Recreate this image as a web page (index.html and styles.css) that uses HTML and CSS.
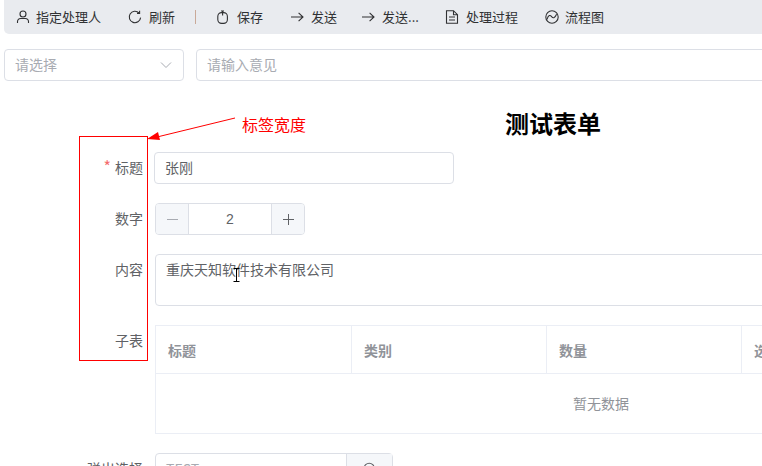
FILE: index.html
```html
<!DOCTYPE html>
<html lang="zh-CN">
<head>
<meta charset="utf-8">
<title>测试表单</title>
<link rel="stylesheet" href="styles.css">
</head>
<body>
<div class="page">
  <div class="toolbar">
    <span class="tool"><svg class="ic" viewBox="0 0 14 14"><circle cx="7" cy="4" r="3"/><path d="M1.5 13v-1.5a3 3 0 0 1 3-3h5a3 3 0 0 1 3 3V13"/></svg>指定处理人</span>
    <span class="tool"><svg class="ic" viewBox="0 0 14 14"><path d="M12.6 7.6A5.7 5.7 0 1 1 11 3"/><path d="M11.6 .8V3.4H9"/></svg>刷新</span>
    <span class="sep"></span>
    <span class="tool"><svg class="ic" viewBox="0 0 14 14"><rect x="1.8" y="2.6" width="9.6" height="10.8" rx="3.8"/><path d="M6.6 5.6V.8M5 1h3"/></svg>保存</span>
    <span class="tool"><svg class="ic" viewBox="0 0 14 14"><path d="M1 7h12M8.6 2.8 13 7l-4.4 4.2"/></svg>发送</span>
    <span class="tool"><svg class="ic" viewBox="0 0 14 14"><path d="M1 7h12M8.6 2.8 13 7l-4.4 4.2"/></svg>发送...</span>
    <span class="tool"><svg class="ic" viewBox="0 0 14 14"><path d="M1.5.7h7l4 4v8.6h-11zM8.5.7v4h4M4 7h6M4 10h6"/></svg>处理过程</span>
    <span class="tool"><svg class="ic" viewBox="0 0 14 14"><circle cx="7" cy="7" r="6.2"/><path d="M2 9.4c1.5-4.6 3.2-4.6 4.6-2.8s3 1.8 5-2.4"/></svg>流程图</span>
  </div>

  <div class="opinion">
    <div class="field select"><span class="placeholder">请选择</span><svg class="chev" viewBox="0 0 12 8"><path d="M1 1.5 6 6.5l5-5"/></svg></div>
    <div class="field grow"><span class="placeholder">请输入意见</span></div>
  </div>

  <h1 class="title">测试表单</h1>

  <form class="form">
    <div class="row">
      <label class="label"><span class="req">*</span>标题</label>
      <div class="field name"><span class="value">张刚</span></div>
    </div>
    <div class="row">
      <label class="label">数字</label>
      <div class="stepper">
        <span class="step minus"><svg class="sign" viewBox="0 0 11 11"><path d="M0 5.5h11"/></svg></span>
        <span class="num">2</span>
        <span class="step plus"><svg class="sign" viewBox="0 0 11 11"><path d="M0 5.5h11M5.5 0v11"/></svg></span>
      </div>
    </div>
    <div class="row">
      <label class="label">内容</label>
      <div class="field area"><span class="value">重庆天知软件技术有限公司</span></div>
    </div>
    <div class="row">
      <label class="label">子表</label>
      <div class="table">
        <div class="thead">
          <span class="th">标题</span>
          <span class="th">类别</span>
          <span class="th">数量</span>
          <span class="th">选择</span>
        </div>
        <div class="empty">暂无数据</div>
      </div>
    </div>
    <div class="row">
      <label class="label">弹出选择</label>
      <div class="picker">
        <span class="pick-text">TEST</span>
        <span class="pick-btn"><svg class="ic search" viewBox="0 0 14 14"><circle cx="6.2" cy="6.2" r="5"/><path d="m10 10 3 3"/></svg></span>
      </div>
    </div>
  </form>

  <div class="anno-box"></div>
  <svg class="anno-arrow" viewBox="0 0 90 24"><path d="M88 1 10 20"/><polygon points="0,22 11,15 13,23"/></svg>
  <span class="anno-text">标签宽度</span>
  <svg class="ibeam" viewBox="0 0 7 14"><path d="M.5.5h6M3.5.5v13M.5 13.5h6"/></svg>
</div>
</body>
</html>
```
FILE: styles.css
```css
* { box-sizing: border-box; }
html, body { margin: 0; height: 100%; overflow: hidden; background: #fff; }
body { font-family: "Noto Sans CJK SC", "Liberation Sans", sans-serif; font-size: 14px; color: #606266; }
.page { position: relative; width: 1106px; height: 466px; overflow: hidden; }

.toolbar { display: flex; align-items: center; gap: 26px; height: 34px; margin-left: 4px; padding-left: 12px; background: #e9ebef; border-radius: 0 0 0 5px; color: #303133; font-size: 13px; }
.tool { display: flex; align-items: center; gap: 7px; line-height: 18px; white-space: nowrap; }
.tool:nth-child(1) { gap: 6px; margin-right: 1px; }
.tool:nth-child(4) { margin-left: -1px; }
.tool:nth-child(5) { margin-left: 1px; }
.tool:nth-child(6) { margin-left: -2px; }
.tool:nth-child(8) { margin-left: 1px; gap: 6px; }
.ic { width: 14px; height: 14px; flex: none; fill: none; stroke: #303133; stroke-width: 1.1; }
.sep { width: 1px; height: 14px; margin: 0 -5px 0 -6px; background: #c9a998; }

.opinion { display: flex; gap: 12px; margin: 15px 0 0 4px; }
.field { display: flex; align-items: center; height: 32px; padding: 0 10px 2px; border: 1px solid #dcdfe6; border-radius: 4px; background: #fff; }
.select { width: 180px; justify-content: space-between; padding-right: 11px; }
.grow { flex: 1; }
.placeholder { color: #a8abb2; }
.chev { width: 12px; height: 8px; margin-top: 2px; fill: none; stroke: #a8abb2; stroke-width: 1; }

.title { margin: 24px 0 0; height: 35px; font-size: 24px; line-height: 35px; font-weight: 700; color: #000; text-align: center; }

.form { display: flex; flex-direction: column; gap: 19px; margin-top: 12px; }
.row { display: flex; align-items: flex-start; gap: 12px; }
.label { flex: none; width: 143px; line-height: 31px; text-align: right; white-space: nowrap; }
.req { margin-right: 4px; color: #f56c6c; font-size: 16px; line-height: 0; }
.value { color: #606266; }
.name { width: 300px; margin-left: -1px; }
.area { flex: 1; align-items: flex-start; height: 52px; padding: 3px 10px; line-height: 22px; }
.stepper { display: flex; width: 150px; height: 32px; border: 1px solid #dcdfe6; border-radius: 4px; }
.step { display: flex; align-items: center; justify-content: center; width: 33px; background: #f5f7fa; }
.sign { width: 11px; height: 11px; fill: none; stroke: #606266; stroke-width: 1; }
.minus { border-right: 1px solid #dcdfe6; border-radius: 3px 0 0 3px; }
.minus .sign { stroke: #a8abb2; }
.plus { border-left: 1px solid #dcdfe6; border-radius: 0 3px 3px 0; }
.num { flex: 1; text-align: center; line-height: 30px; font-family: "Liberation Sans", sans-serif; }

.table { flex: 1; border: 1px solid #ebeef5; height: 109px; }
.thead { display: grid; grid-template-columns: 196px 195px 195px 1fr; height: 48px; border-bottom: 1px solid #ebeef5; }
.th { padding-left: 12px; border-right: 1px solid #ebeef5; line-height: 48px; font-weight: 700; color: #909399; }
.th:last-child { border-right: 0; }
.empty { height: 58px; line-height: 58px; color: #909399; padding-left: 417px; }

.picker { display: flex; width: 238px; height: 32px; border: 1px solid #dcdfe6; border-radius: 4px; }
.pick-text { flex: 1; padding-left: 10px; line-height: 30px; color: #a8abb2; }
.pick-btn { display: flex; align-items: center; justify-content: center; width: 46px; background: #f5f7fa; border-left: 1px solid #dcdfe6; }
.search { stroke: #606266; }

.anno-box { position: absolute; left: 79px; top: 136px; width: 69px; height: 225px; border: 1px solid #f00; }
.anno-arrow { position: absolute; left: 147px; top: 117px; width: 90px; height: 24px; fill: #f00; stroke: #f00; stroke-width: 1; }
.anno-arrow polygon { stroke: none; }
.anno-text { position: absolute; left: 242px; top: 113px; font-size: 16px; line-height: 22px; color: #f00; }
.ibeam { position: absolute; left: 233px; top: 268px; width: 7px; height: 14px; fill: none; stroke: #000; stroke-width: 1; }
```
